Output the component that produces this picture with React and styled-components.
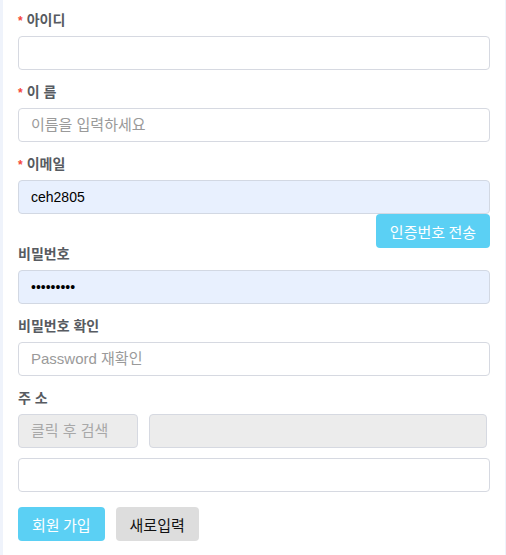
import React from "react";
import styled, { createGlobalStyle } from "styled-components";

const Global = createGlobalStyle`
  html, body { margin: 0; padding: 0; background: #eff3fb; }
  body { font-family: "Liberation Sans", "Noto Sans CJK KR", sans-serif; }
  * { box-sizing: border-box; }
`;

const Card = styled.form`
  background: #ffffff;
  margin: 0 1px 0 3px;
  min-height: 555px;
  padding: 10px 15px 15px 15px;
`;

const Field = styled.div`
  display: flex;
  flex-direction: column;
  margin-bottom: ${(p) => (p.$tight ? "-4px" : "12px")};
`;

const Label = styled.label`
  display: block;
  font-size: 14px;
  font-weight: bold;
  color: #575b61;
  line-height: 20px;
  height: 20px;
  margin-bottom: 6px;
`;

const Star = styled.span`
  color: #f5473a;
  font-size: 12px;
  margin-right: 4px;
`;

const Input = styled.input`
  display: block;
  width: ${(p) => p.$w || "100%"};
  height: 34px;
  padding: 0 12px;
  border: 1px solid ${(p) => (p.$fill ? "#d2d8e3" : "#d6d9e1")};
  border-radius: 4px;
  background: ${(p) => (p.$fill ? "#e8f0fe" : p.$grey ? "#ececec" : "#ffffff")};
  font-family: "Liberation Sans", "Noto Sans CJK KR", sans-serif;
  font-size: 14px;
  color: #000;
  outline: none;
  flex: ${(p) => (p.$grow ? "1" : "none")};
  &::placeholder {
    color: ${(p) => (p.$grey ? "#a8a8a8" : "#9a9a9a")};
    font-size: 15px;
  }
`;

const Row = styled.div`
  display: flex;
  gap: 11px;
  padding-right: 3px;
  margin-bottom: 10px;
`;

const ButtonRow = styled.div`
  display: flex;
  justify-content: ${(p) => (p.$end ? "flex-end" : "flex-start")};
  gap: 11px;
  margin-top: ${(p) => (p.$top || 0)};
`;

const Button = styled.button`
  height: 34px;
  padding: 0 14px;
  border: none;
  border-radius: 4px;
  background: ${(p) => (p.$primary ? "#5bd0f4" : "#dddddd")};
  color: ${(p) => (p.$primary ? "#ffffff" : "#111111")};
  font-family: "Noto Sans CJK KR", "Liberation Sans", sans-serif;
  font-size: 15px;
  cursor: pointer;
`;

export default function App() {
  return (
    <>
      <Global />
      <Card onSubmit={(e) => e.preventDefault()}>
        <Field>
          <Label><Star>*</Star>아이디</Label>
          <Input type="text" />
        </Field>
        <Field>
          <Label><Star>*</Star>이 름</Label>
          <Input type="text" placeholder="이름을 입력하세요" />
        </Field>
        <Field $tight>
          <Label><Star>*</Star>이메일</Label>
          <Input type="text" $fill defaultValue="ceh2805" />
          <ButtonRow $end>
            <Button type="button" $primary>인증번호 전송</Button>
          </ButtonRow>
        </Field>
        <Field>
          <Label>비밀번호</Label>
          <Input type="password" $fill defaultValue="123456789" />
        </Field>
        <Field>
          <Label>비밀번호 확인</Label>
          <Input type="password" placeholder="Password 재확인" />
        </Field>
        <Field>
          <Label>주 소</Label>
          <Row>
            <Input type="text" $grey $w="120px" placeholder="클릭 후 검색" readOnly />
            <Input type="text" $grey $grow readOnly />
          </Row>
          <Input type="text" />
        </Field>
        <ButtonRow $top="15px">
          <Button type="submit" $primary>회원 가입</Button>
          <Button type="reset">새로입력</Button>
        </ButtonRow>
      </Card>
    </>
  );
}
